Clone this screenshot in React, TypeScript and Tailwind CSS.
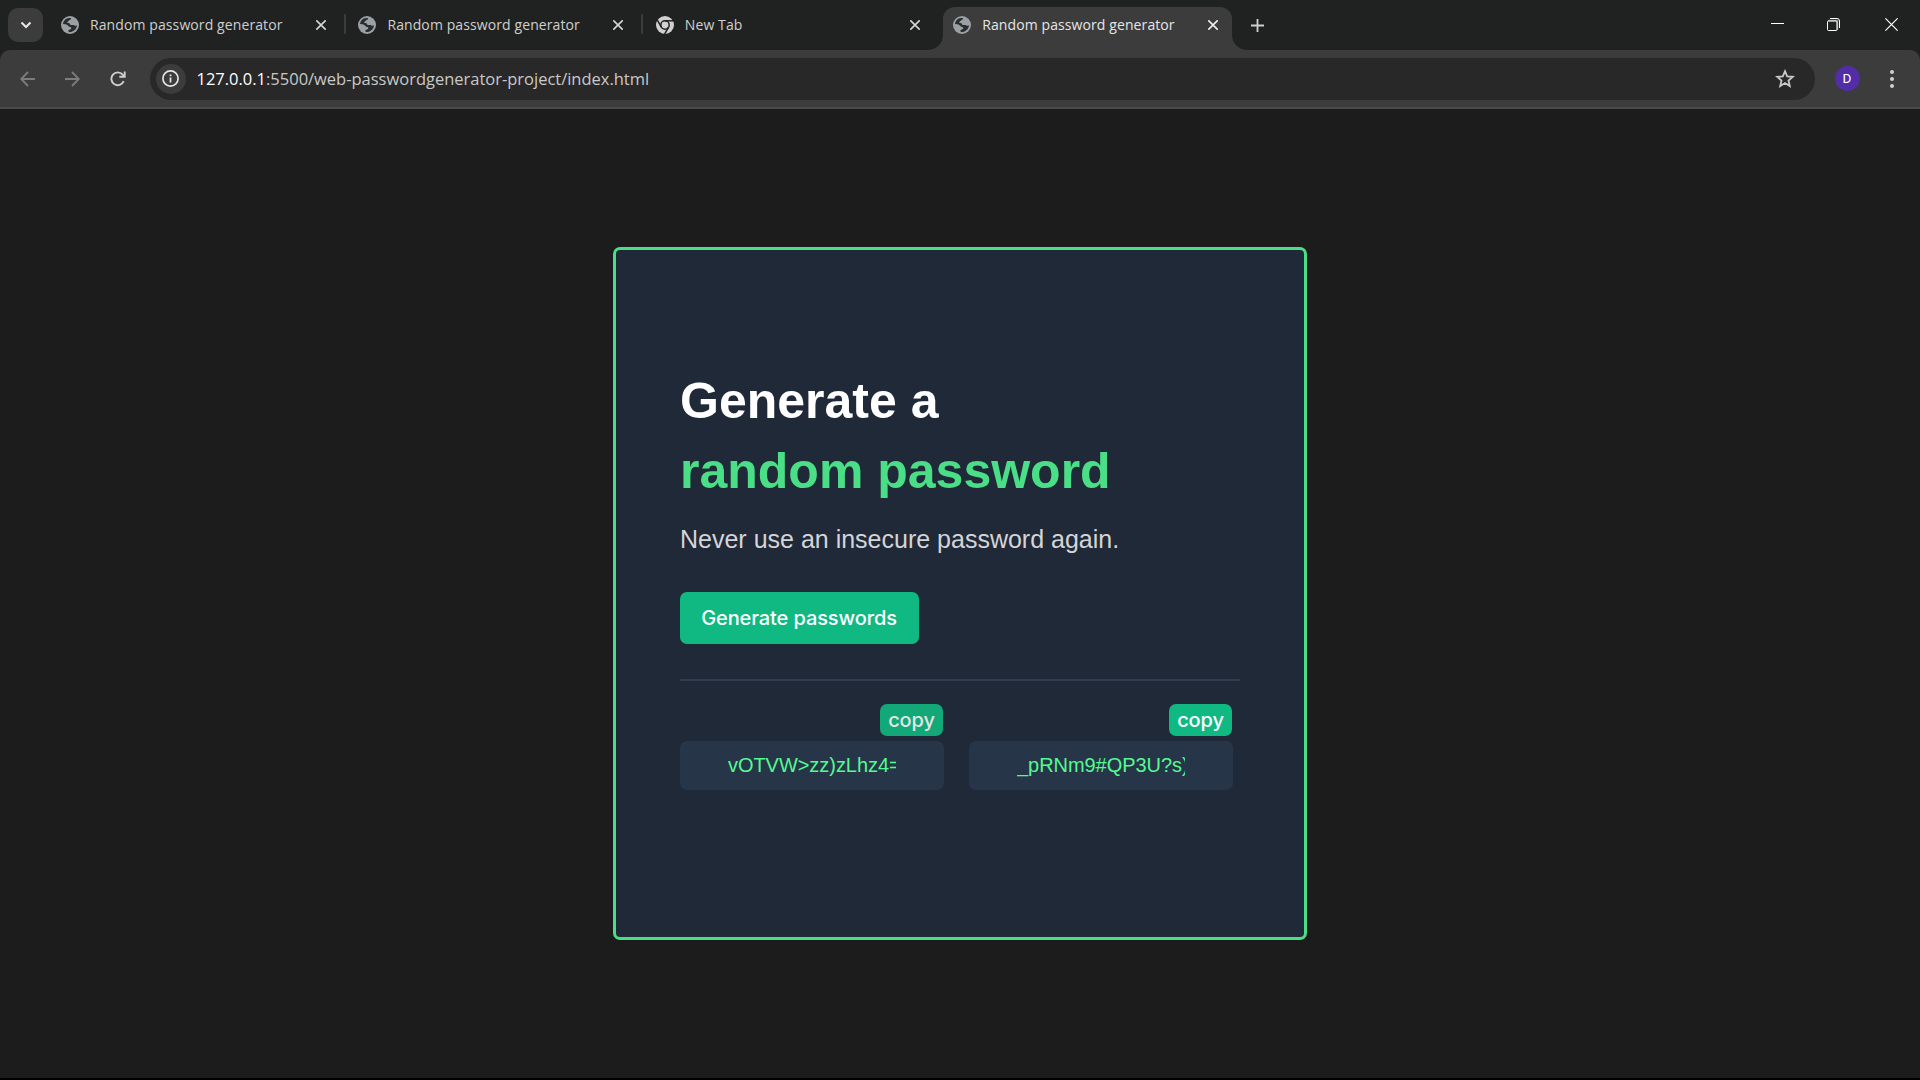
import React from "react";

function Globe() {
  return (
    <svg className="h-[18px] w-[18px] shrink-0" viewBox="0 0 18 18">
      <circle cx="9" cy="9" r="9" fill="#9aa0a6" />
      <path
        d="M2 8C2.4 4.7 5 2.2 8.2 2C9.6 1.8 10.2 2.2 10 3C9.7 3.8 8.4 3.6 8 4.6C7.7 5.5 6.4 5.3 6.2 6.3C6.1 7.4 7.4 6.9 8.3 7.2C9.3 7.6 8.8 8.7 9.9 9C11.2 9.3 12.4 8.7 13.5 9.5C14.3 10.2 16 9.4 16 9.2C15.8 12.8 12.6 16 8.6 16C7.2 15.8 7 15 7.6 14.2C8.4 13.2 10.4 13.6 10.3 12C10.1 10.6 8.4 11.2 7.6 10.3C6.8 9.3 5.8 8.4 4.4 8.3Z"
        fill="#2a2c2d"
      />
    </svg>
  );
}

function ChromeMark() {
  return (
    <svg className="h-[18px] w-[18px] shrink-0" viewBox="0 0 18 18">
      <circle cx="9" cy="9" r="9" fill="#d0d0d0" />
      <g fill="none" stroke="#202221" strokeWidth="1.5">
        <circle cx="9" cy="9" r="4.2" />
        <path d="M9 4.8H17.6" />
        <path d="M9 4.8H17.6" transform="rotate(120 9 9)" />
        <path d="M9 4.8H17.6" transform="rotate(240 9 9)" />
      </g>
    </svg>
  );
}

function Cross({ size = 10, stroke = 1.6, color = "#dadada" }: { size?: number; stroke?: number; color?: string }) {
  return (
    <svg width={size} height={size} viewBox="0 0 10 10" className="shrink-0">
      <path d="M0.3 0.3L9.7 9.7M9.7 0.3L0.3 9.7" stroke={color} strokeWidth={(stroke * 10) / size} />
    </svg>
  );
}

function Tab({ title, icon, active, divider }: { title: string; icon: React.ReactNode; active?: boolean; divider?: boolean }) {
  return (
    <div className={"relative flex h-[43px] w-[289px] items-center rounded-t-[12px] pr-[14.5px] pb-[7px] pl-[10px] " + (active ? "bg-[#3c3c3c] text-[#e6e6e6]" : "text-[#cfcfcf]")}>
      {icon}
      <span className="ml-[11px] flex-1 text-[14px] leading-[20px] tracking-[0.1px] whitespace-nowrap">{title}</span>
      <Cross color={active ? "#f0f0f0" : "#d6d6d6"} />
      {divider && <i className="absolute top-[7px] -right-[6px] h-5 w-[2.5px] rounded-full bg-[#3c3c3c]" />}
      {active && (
        <>
          <svg className="absolute bottom-0 -left-[15px] h-[15px] w-[15px]" viewBox="0 0 15 15">
            <path d="M15 0V15H0A15 15 0 0 0 15 0Z" fill="#3c3c3c" />
          </svg>
          <svg className="absolute -right-[15px] bottom-0 h-[15px] w-[15px]" viewBox="0 0 15 15">
            <path d="M0 0V15H15A15 15 0 0 1 0 0Z" fill="#3c3c3c" />
          </svg>
        </>
      )}
    </div>
  );
}

function TabStrip() {
  return (
    <div className="flex h-[50px] items-start pt-[7px]">
      <button className="mt-px ml-2 grid h-[34px] w-[35px] place-items-center rounded-[10px] bg-[#3c3c3c]">
        <svg width="10" height="6" viewBox="0 0 10 6" className="overflow-visible">
          <path d="M0.5 0.5L5 5L9.5 0.5" fill="none" stroke="#e8e8e8" strokeWidth="2" />
        </svg>
      </button>
      <div className="ml-2 flex gap-[8.4px]">
        <Tab title="Random password generator" icon={<Globe />} divider />
        <Tab title="Random password generator" icon={<Globe />} divider />
        <Tab title="New Tab" icon={<ChromeMark />} />
        <Tab title="Random password generator" icon={<Globe />} active />
      </div>
      <svg className="mt-[11.5px] ml-[18.5px]" width="13" height="13" viewBox="0 0 13 13">
        <path d="M6.5 0V13M0 6.5H13" stroke="#d0d0d0" strokeWidth="1.8" />
      </svg>
      <div className="mt-[11px] mr-[22px] ml-auto flex gap-[43px]">
        <svg width="13" height="13" viewBox="0 0 13 13">
          <path d="M0 5.5H13" stroke="#fff" />
        </svg>
        <svg width="13" height="13" viewBox="0 0 13 13" fill="none">
          <path d="M3 0.5H10Q12.5 0.5 12.5 3V10" stroke="#fff" />
          <path d="M1 2.5H10.5V12" stroke="#8a8a8a" strokeWidth="1.4" />
          <rect x="0.5" y="3" width="9.5" height="9.5" rx="1" stroke="#fff" />
        </svg>
        <div className="ml-[2px]">
          <Cross size={13} stroke={1.2} color="#fff" />
        </div>
      </div>
    </div>
  );
}

function Toolbar() {
  return (
    <div className="flex h-[59px] items-center rounded-t-[10px] border-b-2 border-[#4a4a4a] bg-[#3c3c3c]">
      <svg className="ml-5" width="15" height="16" viewBox="0 0 15 16" fill="none" stroke="#7c7c7c" strokeWidth="1.8">
        <path d="M15 8H1.5M8 1L1.2 8L8 15" />
      </svg>
      <svg className="ml-[30px]" width="15" height="16" viewBox="0 0 15 16" fill="none" stroke="#7c7c7c" strokeWidth="1.8">
        <path d="M0 8H13.5M7 1L13.8 8L7 15" />
      </svg>
      <svg className="ml-[30px]" width="16" height="16" viewBox="0 0 16 16" fill="none" stroke="#cfcfcf" strokeWidth="1.9">
        <path d="M13.7 10.2A6.4 6.4 0 1 1 12.7 3.7L14.5 5.5" />
        <path d="M14.7 0.5V5.8H9.3" />
      </svg>
      <div className="ml-[23.5px] flex h-[42px] w-[1665px] items-center rounded-full bg-[#282828] pr-5 pl-[6px]">
        <div className="grid h-[30px] w-[30px] place-items-center rounded-full bg-[#3c3c3c]">
          <svg width="17" height="17" viewBox="0 0 17 17">
            <circle cx="8.5" cy="8.5" r="7.6" fill="none" stroke="#e3e3e3" strokeWidth="1.7" />
            <path d="M8.5 7.5V12.5M8.5 4.5V6.2" stroke="#e3e3e3" strokeWidth="1.8" />
          </svg>
        </div>
        <p className="ml-[11px] flex-1 pt-px text-[16.5px] leading-[24px] tracking-[-0.01px] text-[#c9c9c9]">
          <span className="text-white">127.0.0.1</span>:5500/web-passwordgenerator-project/index.html
        </p>
        <svg width="20" height="19" viewBox="0 0 20 19" fill="none" stroke="#c9c9c9" strokeWidth="1.8">
          <path d="M10 2.2L12.2 7.3L17.8 7.8L13.5 11.5L14.8 17L10 14.1L5.2 17L6.5 11.5L2.2 7.8L7.8 7.3Z" />
        </svg>
      </div>
      <div className="ml-5 grid h-[25px] w-[25px] place-items-center rounded-full bg-[#512da8] font-['Roboto',sans-serif] text-[13.5px] leading-none text-white">D</div>
      <div className="ml-[30.5px] flex flex-col gap-[3px]">
        <i className="h-1 w-1 rounded-full bg-[#d0d0d0]" />
        <i className="h-1 w-1 rounded-full bg-[#d0d0d0]" />
        <i className="h-1 w-1 rounded-full bg-[#d0d0d0]" />
      </div>
    </div>
  );
}

function PasswordField({ value, dimmed }: { value: string; dimmed?: boolean }) {
  return (
    <div className="flex w-[264px] flex-col">
      <button
        className={
          "mr-px h-8 w-[63px] self-end rounded-[7px] font-['Inter',sans-serif] text-[20px] leading-none font-medium tracking-[-0.1px] " +
          (dimmed ? "bg-[#12a877] text-[#e2e5e6]" : "bg-[#10b981] text-white")
        }
      >
        copy
      </button>
      <div className="mt-[5px] h-[49px] rounded-[7px] bg-[#273549] px-12">
        <div className="w-[168px] overflow-hidden text-[20px] leading-[49px] tracking-[-0.05px] whitespace-nowrap text-[#55f991]">{value}</div>
      </div>
    </div>
  );
}

function Card() {
  return (
    <main className="h-[693px] w-[694px] rounded-[7px] border-[3px] border-[#4adf86] bg-[#1f2937] px-16 font-['Liberation_Sans',Arial,sans-serif]">
      <h1 className="mt-[116px] text-[50px] leading-[70px] font-bold text-white">
        Generate a<br />
        <span className="text-[#4adf86]">random password</span>
      </h1>
      <p className="mt-[16px] text-[25px] leading-[35px] text-[#d5d4d8]">Never use an insecure password again.</p>
      <button className="mt-[35px] block h-[52px] w-[239px] rounded-[7px] bg-[#10b981] pr-px font-['Inter',sans-serif] text-[20px] leading-none font-medium tracking-[-0.1px] whitespace-nowrap text-white">
        Generate passwords
      </button>
      <hr className="mt-[35px] w-[560px] border-t-2 border-[#2f3b4e]" />
      <div className="mt-[23px] flex gap-[25px]">
        <PasswordField value="vOTVW>zz)zLhz4=" dimmed />
        <PasswordField value="_pRNm9#QP3U?s)" />
      </div>
    </main>
  );
}

export default function App() {
  return (
    <div className="flex h-[1080px] w-[1920px] flex-col overflow-hidden border-b-2 border-black bg-[#202221] font-['Open_Sans',sans-serif]">
      <TabStrip />
      <Toolbar />
      <div className="flex flex-1 justify-center bg-[#1c1c1c] pt-[138px]">
        <Card />
      </div>
    </div>
  );
}
